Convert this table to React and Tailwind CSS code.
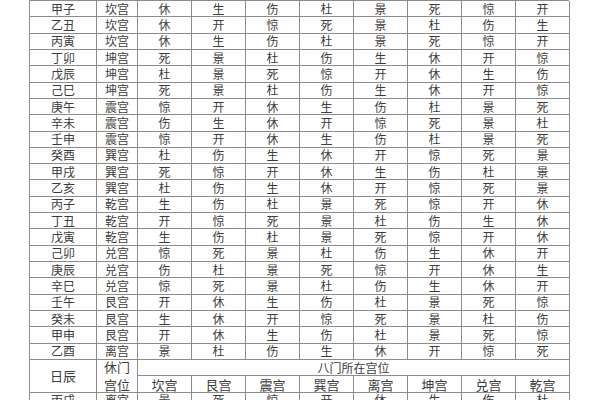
import React from "react";

const rows = [
  ["甲子", "坎宫", "休生伤杜景死惊开"],
  ["乙丑", "坎宫", "休开惊死景杜伤生"],
  ["丙寅", "坎宫", "休生伤杜景死惊开"],
  ["丁卯", "坤宫", "死景杜伤生休开惊"],
  ["戊辰", "坤宫", "杜景死惊开休生伤"],
  ["己巳", "坤宫", "死景杜伤生休开惊"],
  ["庚午", "震宫", "惊开休生伤杜景死"],
  ["辛未", "震宫", "伤生休开惊死景杜"],
  ["壬申", "震宫", "惊开休生伤杜景死"],
  ["癸酉", "巽宫", "杜伤生休开惊死景"],
  ["甲戌", "巽宫", "死惊开休生伤杜景"],
  ["乙亥", "巽宫", "杜伤生休开惊死景"],
  ["丙子", "乾宫", "生伤杜景死惊开休"],
  ["丁丑", "乾宫", "开惊死景杜伤生休"],
  ["戊寅", "乾宫", "生伤杜景死惊开休"],
  ["己卯", "兑宫", "惊死景杜伤生休开"],
  ["庚辰", "兑宫", "伤杜景死惊开休生"],
  ["辛巳", "兑宫", "惊死景杜伤生休开"],
  ["壬午", "艮宫", "开休生伤杜景死惊"],
  ["癸未", "艮宫", "生休开惊死景杜伤"],
  ["甲申", "艮宫", "开休生伤杜景死惊"],
  ["乙酉", "离宫", "景杜伤生休开惊死"],
];

const palaces = ["坎宫", "艮宫", "震宫", "巽宫", "离宫", "坤宫", "兑宫", "乾宫"];

const cell =
  "flex items-center justify-center border-r border-b border-[#8c8c8c] leading-none";

export default function App() {
  return (
    <div
      className="w-[600px] h-[400px] overflow-hidden bg-white text-[12px] text-[#3c3c3c]"
      style={{ fontFamily: '"Noto Sans CJK SC", "Noto Sans", sans-serif' }}
    >
      <div className="ml-[29px] w-[540px] grid grid-cols-[67px_41px_repeat(8,54px)] auto-rows-[16.32px] border-l border-t border-[#8c8c8c]">
        {rows.map(([d, p, g]) => (
          <React.Fragment key={d}>
            <div className={cell}>{d}</div>
            <div className={cell}>{p}</div>
            {g.split("").map((c, i) => (
              <div key={i} className={cell}>
                {c}
              </div>
            ))}
          </React.Fragment>
        ))}
        <div className={cell + " row-span-2 text-[13px]"}>日辰</div>
        <div className={cell + " row-span-2 flex-col gap-[5px] text-[13px]"}>
          <span>休门</span>
          <span>宫位</span>
        </div>
        <div className={cell + " col-span-8 text-[12px]"}>八门所在宫位</div>
        {palaces.map((p) => (
          <div key={p} className={cell + " text-[13px] pt-[2px]"}>
            {p}
          </div>
        ))}
        <div className={cell}>丙戌</div>
        <div className={cell}>离宫</div>
        {"景死惊开休生伤杜".split("").map((c, i) => (
          <div key={i} className={cell}>
            {c}
          </div>
        ))}
      </div>
    </div>
  );
}
